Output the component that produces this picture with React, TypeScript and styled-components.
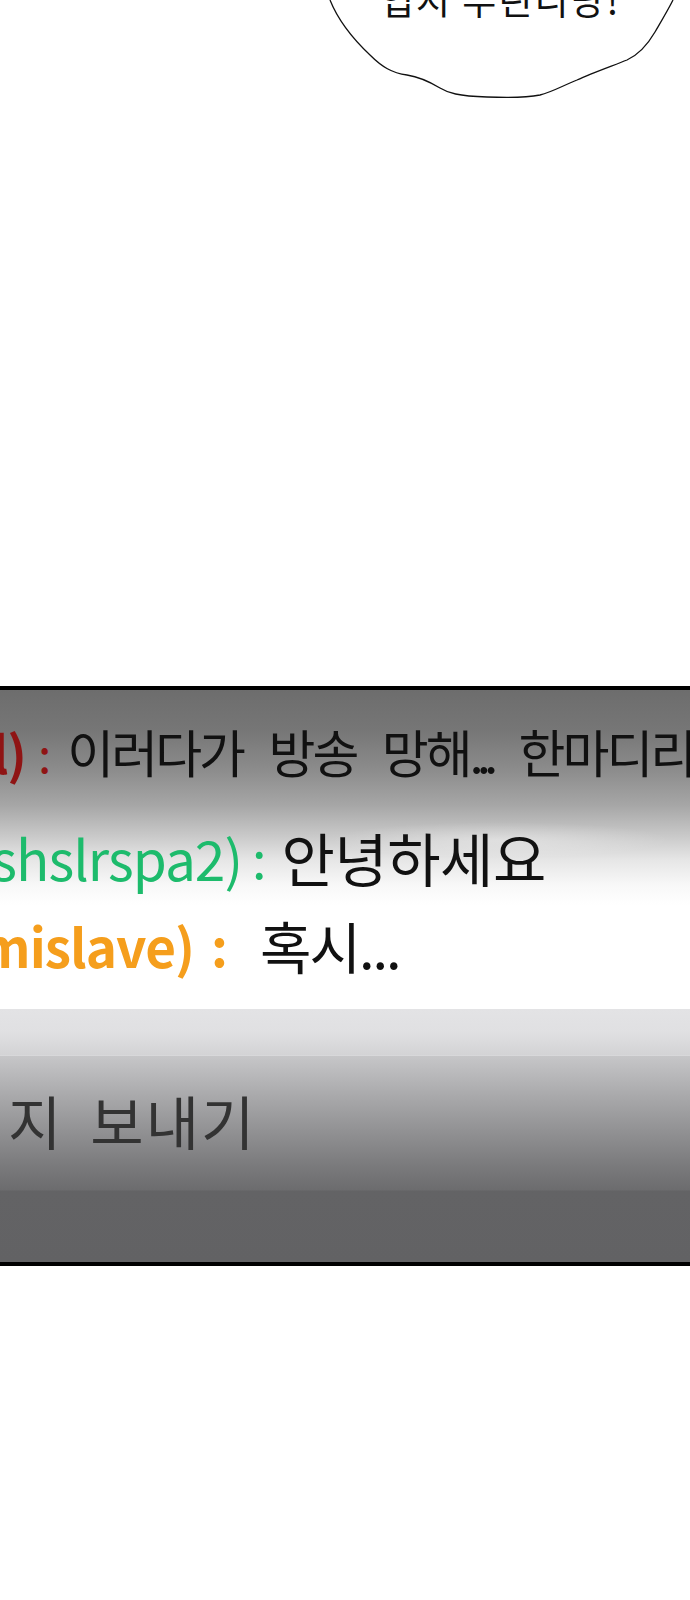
import React from "react";
import styled, { createGlobalStyle } from "styled-components";

const Global = createGlobalStyle`
  html, body { margin: 0; padding: 0; background: #fff; }
  body { width: 690px; overflow-x: hidden; font-family: "Noto Sans CJK KR", "Noto Sans", sans-serif; }
`;

const Page = styled.div`
  width: 690px;
  min-height: 1600px;
  background: #fff;
  overflow: hidden;
`;

const Scene = styled.div`
  position: relative;
  height: 686px;
`;

const BubbleArt = styled.svg`
  display: block;
  width: 690px;
  height: 100px;
`;

const BubbleText = styled.div`
  position: absolute;
  top: -19px;
  left: 380px;
  font-size: 37px;
  line-height: 37px;
  letter-spacing: 2px;
  color: #111;
  white-space: nowrap;
`;

const ChatPanel = styled.section`
  border-top: 4px solid #000;
  border-bottom: 4px solid #000;
  display: flex;
  flex-direction: column;
`;

const Messages = styled.div`
  height: 319px;
  padding-top: 8px;
  box-sizing: border-box;
  display: flex;
  flex-direction: column;
  background:
    radial-gradient(ellipse 170px 18px at 500px 150px, rgba(255,255,255,0.35), rgba(255,255,255,0) 100%),
    linear-gradient(
      to bottom,
      #6d6d6d 0px,
      #767676 40px,
      #8c8c8c 80px,
      #a6a6a6 115px,
      #c8c8c8 145px,
      #e6e6e6 170px,
      #f8f8f8 195px,
      #ffffff 215px,
      #ffffff 100%
    );
`;

const Row = styled.div<{ $h: number }>`
  height: ${(p) => p.$h}px;
  display: flex;
  align-items: center;
  white-space: nowrap;
`;

const Name = styled.span<{ $w: number; $color: string; $size: number; $bold?: boolean }>`
  width: ${(p) => p.$w}px;
  flex: none;
  display: flex;
  justify-content: flex-end;
  color: ${(p) => p.$color};
  font-size: ${(p) => p.$size}px;
  font-weight: ${(p) => (p.$bold ? 700 : 400)};
  line-height: 1;
  letter-spacing: -1px;
`;

const Colon = styled.span<{ $gap: number; $color: string; $size: number; $bold?: boolean }>`
  margin-left: ${(p) => p.$gap}px;
  color: ${(p) => p.$color};
  font-size: ${(p) => p.$size}px;
  font-weight: ${(p) => (p.$bold ? 700 : 400)};
  line-height: 1;
`;

const Message = styled.span<{ $gap: number; $size: number; $ls: number; $ws?: number }>`
  margin-left: ${(p) => p.$gap}px;
  color: #111;
  font-size: ${(p) => p.$size}px;
  letter-spacing: ${(p) => p.$ls}px;
  word-spacing: ${(p) => p.$ws ?? 0}px;
  line-height: 1;
`;

const Dots = styled.span`
  letter-spacing: -7px;
  margin-right: 2px;
`;

const InputBar = styled.div`
  display: flex;
  flex-direction: column;
`;

const InputTop = styled.div`
  height: 46px;
  background: linear-gradient(to bottom, #e3e3e5 0%, #e0e0e2 50%, #d3d3d5 100%);
  border-bottom: 1px solid #d8d8da;
`;

const InputMain = styled.div`
  height: 206px;
  box-sizing: border-box;
  padding: 35px 0 0 8px;
  background: linear-gradient(
    to bottom,
    #c6c6c8 0px,
    #a9a9ab 40px,
    #8e8e90 80px,
    #7a7a7c 110px,
    #6c6c6e 134px,
    #636365 135px,
    #626264 100%
  );
`;

const Placeholder = styled.span`
  color: #333333;
  font-size: 58px;
  line-height: 58px;
  letter-spacing: 2px;
  word-spacing: 12px;
  white-space: nowrap;
`;

export default function App() {
  return (
    <Page>
      <Global />
      <Scene>
        <BubbleArt viewBox="0 0 690 100">
          <path
            d="M330 0 C 338 20, 352 38, 370 55 C 382 67, 392 73, 407 75 C 420 77, 430 82, 440 88 C 448 93, 458 96, 487 97 C 510 98, 525 98, 540 95 C 552 92, 562 86, 577 80 C 592 73, 612 66, 627 60 C 640 54, 648 44, 655 32 C 662 20, 668 10, 673 0"
            fill="#fff"
            stroke="#111"
            strokeWidth="1.3"
          />
        </BubbleArt>
        <BubbleText>업시 부린니당!</BubbleText>
      </Scene>
      <ChatPanel>
        <Messages>
          <Row $h={107}>
            <Name $w={26} $color="#8f1414" $size={52} $bold>l)</Name>
            <Colon $gap={12} $color="#8f1414" $size={48}>:</Colon>
            <Message $gap={16} $size={51} $ls={-3} $ws={17}>
              이러다가 방송 망해<Dots>...</Dots> 한마디리
            </Message>
          </Row>
          <Row $h={104}>
            <Name $w={242} $color="#1dbb6c" $size={55}>shslrspa2)</Name>
            <Colon $gap={10} $color="#1dbb6c" $size={52}>:</Colon>
            <Message $gap={15} $size={58} $ls={-0.5}>안녕하세요</Message>
          </Row>
          <Row $h={72}>
            <Name $w={194} $color="#f59e1c" $size={53} $bold>mislave)</Name>
            <Colon $gap={17} $color="#f59e1c" $size={52} $bold>:</Colon>
            <Message $gap={32} $size={56} $ls={-2}>혹시...</Message>
          </Row>
        </Messages>
        <InputBar>
          <InputTop />
          <InputMain>
            <Placeholder>지 보내기</Placeholder>
          </InputMain>
        </InputBar>
      </ChatPanel>
    </Page>
  );
}
